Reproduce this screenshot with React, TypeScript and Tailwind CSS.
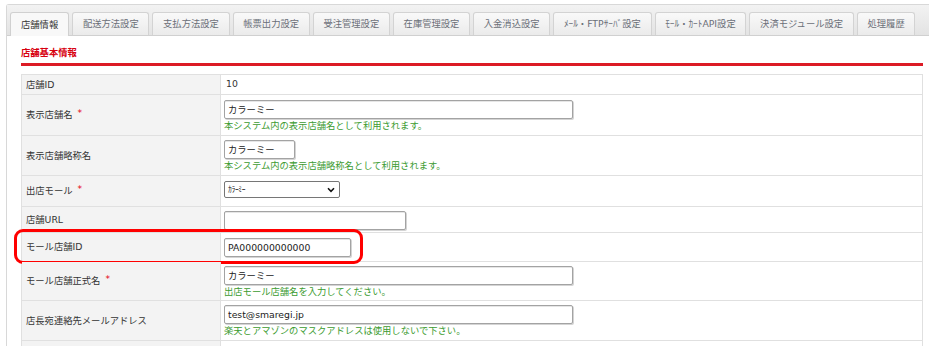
import React from "react";

const tabs = [
  "店舗情報",
  "配送方法設定",
  "支払方法設定",
  "帳票出力設定",
  "受注管理設定",
  "在庫管理設定",
  "入金消込設定",
  "ﾒｰﾙ・FTPｻｰﾊﾞ設定",
  "ﾓｰﾙ・ｶｰﾄAPI設定",
  "決済モジュール設定",
  "処理履歴",
];

function Input({ w, value }: { w: string; value?: string }) {
  return (
    <div
      className={`${w} h-[19px] bg-white border border-[#a3a3a3] rounded-[2px] shadow-[inset_0_1px_0_#e6e6e6,1px_1px_0_#d4d4d4] flex items-center pl-[3px] text-[#222] leading-none`}
    >
      {value}
    </div>
  );
}

function Help({ children }: { children: React.ReactNode }) {
  return <div className="text-[#3b9b2f] leading-[12px] mt-[1px]">{children}</div>;
}

function Req() {
  return <span className="text-[#e60012] ml-[5px] text-[9px] relative -top-[1px]">*</span>;
}

function Row({
  h,
  label,
  children,
  required,
  extra,
}: {
  h: string;
  label: string;
  children: React.ReactNode;
  required?: boolean;
  extra?: React.ReactNode;
}) {
  return (
    <div className={`relative flex ${h} border-b border-[#e0e0e0]`}>
      <div className="w-[199px] shrink-0 bg-[#f3f3f3] border-r border-[#e0e0e0] flex items-center pl-[4px] text-[#333]">
        <span>{label}</span>
        {required && <Req />}
      </div>
      <div className="flex-1 pl-[3px] pt-[4px] flex flex-col items-start">{children}</div>
      {extra}
    </div>
  );
}

export default function App() {
  return (
    <div className="w-[945px] h-[346px] overflow-hidden bg-white text-[9.3px] text-[#333] font-['DejaVu_Sans','Noto_Sans_CJK_JP',sans-serif]">
      <div className="ml-[6px] mt-[4px] w-[923px] h-[342px] border-l border-t border-[#d8d8d8] rounded-tl-[3px]">
        {/* tab bar */}
        <div className="h-[31px] bg-gradient-to-b from-[#f2f2f2] to-[#e3e3e3] border-b border-[#d0d0d0] flex items-end pl-[3px] gap-[3px]">
          {tabs.map((t, i) =>
            i === 0 ? (
              <div
                key={t}
                className="h-[24px] -mb-px px-[10px] flex items-center bg-[#f8f8f8] border border-b-0 border-[#d0d0d0] rounded-t-[3px] text-[#333]"
              >
                {t}
              </div>
            ) : (
              <div
                key={t}
                className="h-[23px] px-[9.7px] flex items-center bg-gradient-to-b from-[#f9f9f9] to-[#ebebeb] border border-b-0 border-[#d3d3d3] rounded-t-[3px] text-[#6b6f78]"
              >
                {t}
              </div>
            )
          )}
        </div>

        {/* content */}
        <div className="pl-[14px] pr-[6px]">
          <div className="mt-[10px] h-[14px] leading-[14px] text-[#d7000f] font-bold">店舗基本情報</div>
          <div className="mt-[3px] h-[3px] bg-[#dc1b25]" />

          <div className="mt-[8px] border-l border-r border-t border-[#e0e0e0]">
            <Row h="h-[20px]" label="店舗ID">
              <div className="pl-[2px] -mt-[1px] leading-[12px]">10</div>
            </Row>
            <Row h="h-[41px]" label="表示店舗名" required>
              <div className="pt-[1px]" />
              <Input w="w-[349px]" value="カラーミー" />
              <Help>本システム内の表示店舗名として利用されます。</Help>
            </Row>
            <Row h="h-[40px]" label="表示店舗略称名">
              <Input w="w-[71px]" value="カラーミー" />
              <Help>本システム内の表示店舗略称名として利用されます。</Help>
            </Row>
            <Row h="h-[31px]" label="出店モール" required>
              <div className="w-[116px] h-[17px] mt-[1px] bg-white border border-[#767676] rounded-[2px] flex items-center justify-between pl-[3px] pr-[4px]">
                <span className="text-[7.5px] text-[#111] tracking-[-0.3px]">ｶﾗｰﾐｰ</span>
                <svg width="8" height="6" viewBox="0 0 8 6">
                  <path d="M1 1.3 L4 4.3 L7 1.3" fill="none" stroke="#111" strokeWidth="1.6" />
                </svg>
              </div>
            </Row>
            <Row h="h-[26px]" label="店舗URL">
              <Input w="w-[182px]" />
            </Row>
            <Row
              h="h-[29px]"
              label="モール店舗ID"
              extra={
                <div className="absolute left-[-8px] top-[-4px] w-[349px] h-[35px] border-[3px] border-[#ff0000] rounded-[9px] pointer-events-none" />
              }
            >
              <div className="pt-[1px]" />
              <Input w="w-[127px]" value="PA000000000000" />
            </Row>
            <Row h="h-[39px]" label="モール店舗正式名" required>
              <Input w="w-[349px]" value="カラーミー" />
              <Help>出店モール店舗名を入力してください。</Help>
            </Row>
            <Row h="h-[40px]" label="店長宛連絡先メールアドレス">
              <Input w="w-[349px]" value="test@smaregi.jp" />
              <Help>楽天とアマゾンのマスクアドレスは使用しないで下さい。</Help>
            </Row>
            <Row h="h-[30px]" label="">
              <div />
            </Row>
          </div>
        </div>
      </div>
    </div>
  );
}
